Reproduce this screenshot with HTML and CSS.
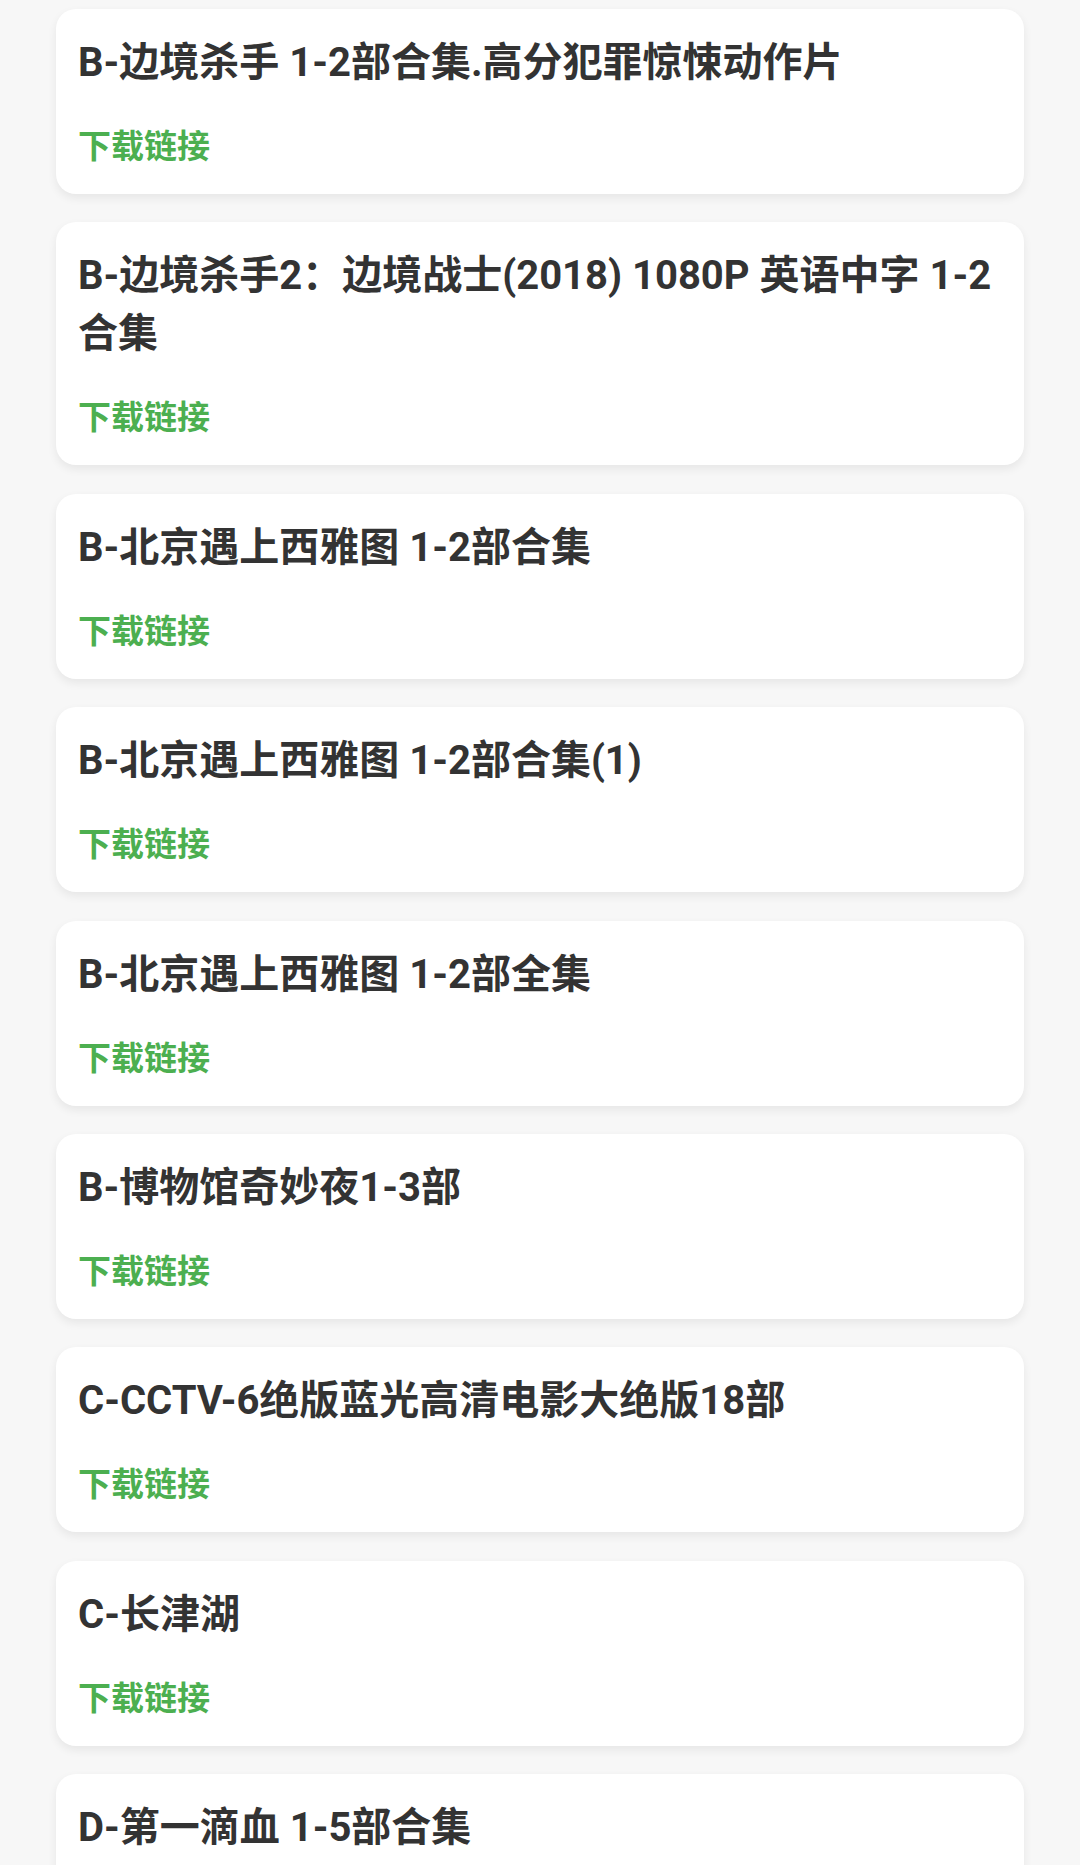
FILE: index.html
```html
<!DOCTYPE html>
<html lang="zh-CN">
<head>
  <meta charset="UTF-8">
  <title>下载列表</title>
  <link rel="stylesheet" href="styles.css">
</head>
<body>
<div class="list">
  <div class="item">
    <p class="title">B-边境杀手 1-2部合集.高分犯罪惊悚动作片</p>
    <a class="link" href="#">下载链接</a>
  </div>
  <div class="item">
    <p class="title">B-边境杀手2：边境战士(2018) 1080P 英语中字 1-2合集</p>
    <a class="link" href="#">下载链接</a>
  </div>
  <div class="item">
    <p class="title">B-北京遇上西雅图 1-2部合集</p>
    <a class="link" href="#">下载链接</a>
  </div>
  <div class="item">
    <p class="title">B-北京遇上西雅图 1-2部合集(1)</p>
    <a class="link" href="#">下载链接</a>
  </div>
  <div class="item">
    <p class="title">B-北京遇上西雅图 1-2部全集</p>
    <a class="link" href="#">下载链接</a>
  </div>
  <div class="item">
    <p class="title">B-博物馆奇妙夜1-3部</p>
    <a class="link" href="#">下载链接</a>
  </div>
  <div class="item">
    <p class="title">C-CCTV-6绝版蓝光高清电影大绝版18部</p>
    <a class="link" href="#">下载链接</a>
  </div>
  <div class="item">
    <p class="title">C-长津湖</p>
    <a class="link" href="#">下载链接</a>
  </div>
  <div class="item">
    <p class="title">D-第一滴血 1-5部合集</p>
    <a class="link" href="#">下载链接</a>
  </div>
</div>
</body>
</html>
```

FILE: styles.css
```css
html, body {margin: 0; padding: 0;}
body {background-color: #f7f7f7; font-family: Roboto, "Noto Sans CJK SC", sans-serif;}

.list {display: flex; flex-direction: column; gap: 28.4px; padding: 9px 56px 40px;}

.item {background-color: #fff; border-radius: 20px; padding: 25px 24px 25px 22px; box-shadow: 0 4px 10px rgba(0,0,0,0.07);}
.item .title {margin: 0; font-size: 40px; line-height: 58px; font-weight: 700; color: #333333;}
.item .link {display: block; margin-top: 33px; font-size: 33px; line-height: 44px; font-weight: 600; color: #4caf50; text-decoration: none;}
```
